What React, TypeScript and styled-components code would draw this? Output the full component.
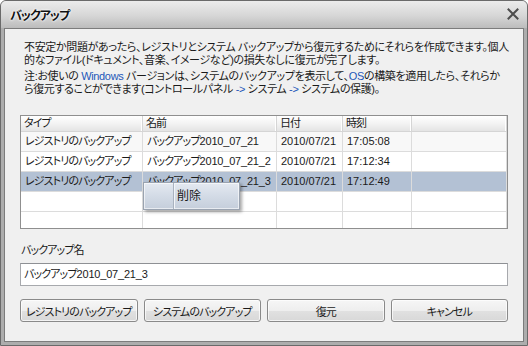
import React from "react";
import styled, { createGlobalStyle } from "styled-components";

const Global = createGlobalStyle`
  html, body { margin: 0; padding: 0; background: #ffffff; }
  body {
    font-family: "Liberation Sans", "Noto Sans CJK JP", sans-serif;
    font-size: 11px;
    color: #1a1a1a;
    font-feature-settings: "palt";
  }
  * { box-sizing: border-box; }
`;

const Window = styled.div`
  width: 528px;
  height: 346px;
  border: 1px solid #6a6a6a;
  border-radius: 6px 6px 0 0;
  overflow: hidden;
  display: flex;
  flex-direction: column;
  background: #acacac;
`;

const TitleBar = styled.div`
  height: 27px;
  flex: none;
  display: flex;
  align-items: center;
  justify-content: space-between;
  padding: 0 8px 1px 9px;
  background: linear-gradient(to bottom, #ececec 0%, #d6d6d6 55%, #bcbcbc 100%);
`;

const Title = styled.span`
  font-weight: bold;
  font-size: 12px;
  letter-spacing: -1px;
  color: #111;
  text-shadow: 0 0 3px #ffffff, 0 0 2px #ffffff;
`;

const Frame = styled.div`
  flex: 1;
  display: flex;
  padding: 0 3px 3px;
  background: #adadad;
`;

const Body = styled.div`
  flex: 1;
  min-width: 0;
  border: 1px solid #7c7c7c;
  background: #f0f0f0;
  padding: 12px 15px 0 15px;
  display: flex;
  flex-direction: column;
`;

const Para = styled.p<{ $gap?: number }>`
  margin: ${(p) => p.$gap ?? 0}px 0 0 4px;
  font-size: 11px;
  letter-spacing: -0.35px;
  line-height: 13px;
  white-space: nowrap;
`;

const Blue = styled.span`
  color: #2457b8;
`;

const Num = styled.span`
  letter-spacing: -0.2px;
`;

const TableWrap = styled.div`
  position: relative;
  margin-top: 19px;
  height: 114px;
  border: 1px solid #8f8f8f;
  background: #ffffff;
  overflow: hidden;
`;

const COLS = "122px 134px 66px 69px 1fr";

const HeaderRow = styled.div`
  display: grid;
  grid-template-columns: ${COLS};
  height: 16px;
  background: linear-gradient(to bottom, #ffffff 0%, #f3f3f3 50%, #e4e4e4 100%);
  border-bottom: 1px solid #d5d5d5;
`;

const HeaderCell = styled.div`
  font-size: 11px;
  letter-spacing: -0.9px;
  line-height: 15px;
  padding-left: 3px;
  border-right: 1px solid #d5d5d5;
  box-shadow: inset -1px 0 0 #ffffff;
  white-space: nowrap;
  overflow: hidden;
`;

const Row = styled.div<{ $bg: string }>`
  display: grid;
  grid-template-columns: ${COLS};
  height: 20px;
  background: ${(p) => p.$bg};
  border-bottom: 1px solid #dcdcdc;
`;

const Cell = styled.div<{ $latin?: boolean }>`
  font-size: 11px;
  letter-spacing: ${(p) => (p.$latin ? "0" : "-0.9px")};
  line-height: 19px;
  padding-left: 4px;
  border-right: 1px solid #dcdcdc;
  white-space: nowrap;
  overflow: hidden;
`;

const Menu = styled.div`
  position: absolute;
  left: 122px;
  top: 66px;
  width: 97px;
  height: 28px;
  display: flex;
  border: 1px solid #9aa3b0;
  background: linear-gradient(to bottom, #e4e9f1 0%, #d3dbe6 50%, #c5cedb 100%);
  box-shadow: inset 0 0 0 1px rgba(255, 255, 255, 0.6), 2px 2px 3px rgba(0, 0, 0, 0.35);
`;

const MenuIconCol = styled.div`
  width: 30px;
  border-right: 1px solid #a9b2bf;
  box-shadow: 1px 0 0 #f2f5f9;
`;

const MenuItem = styled.div`
  font-size: 12px;
  line-height: 26px;
  padding-left: 3px;
`;

const Label = styled.div`
  margin-top: 14px;
  margin-left: 1px;
  font-size: 11px;
  letter-spacing: -0.9px;
  line-height: 15px;
`;

const Input = styled.div`
  margin-top: 5px;
  height: 23px;
  border: 1px solid #a7a9ad;
  border-top-color: #8e9094;
  background: #ffffff;
  font-size: 11px;
  letter-spacing: -0.9px;
  line-height: 20px;
  padding-left: 3px;
`;

const ButtonRow = styled.div`
  margin-top: 13px;
  display: grid;
  grid-template-columns: repeat(4, minmax(0, 1fr));
  gap: 6px;
`;

const Button = styled.div`
  height: 23px;
  min-width: 0;
  border: 1px solid #8a8a8a;
  border-radius: 3px;
  background: linear-gradient(to bottom, #f6f6f6 0%, #eeeeee 50%, #e1e1e1 51%, #d8d8d8 100%);
  box-shadow: inset 0 0 0 1px rgba(255, 255, 255, 0.7);
  display: flex;
  align-items: center;
  justify-content: center;
  font-size: 11px;
  letter-spacing: -0.9px;
  white-space: nowrap;
  overflow: hidden;
`;

const CloseIcon = () => (
  <svg width="12" height="12" viewBox="0 0 12 12">
    <path d="M1.5 1.5 L10.5 10.5 M10.5 1.5 L1.5 10.5" stroke="#4d4d4d" strokeWidth="2" strokeLinecap="square" />
  </svg>
);

const rows = [
  { type: "レジストリのバックアップ", num: "2010_07_21", date: "2010/07/21", time: "17:05:08", bg: "#f8f8f8" },
  { type: "レジストリのバックアップ", num: "2010_07_21_2", date: "2010/07/21", time: "17:12:34", bg: "#ffffff" },
  { type: "レジストリのバックアップ", num: "2010_07_21_3", date: "2010/07/21", time: "17:12:49", bg: "#b3c1d4" },
  { type: "", num: "", date: "", time: "", bg: "#ffffff" },
  { type: "", num: "", date: "", time: "", bg: "#ffffff" },
];

export default function App() {
  return (
    <>
      <Global />
      <Window>
        <TitleBar>
          <Title>バックアップ</Title>
          <CloseIcon />
        </TitleBar>
        <Frame>
          <Body>
            <Para>
              不安定か問題があったら、レジストリとシステム バックアップから復元するためにそれらを作成できます。個人
              <br />
              的なファイル(ドキュメント、音楽、イメージなど)の損失なしに復元が完了します。
            </Para>
            <Para $gap={3}>
              注:お使いの <Blue>Windows</Blue> バージョンは、システムのバックアップを表示して、<Blue>OS</Blue>の構築を適用したら、それらか
              <br />
              ら復元することができます(コントロールパネル <Blue>-&gt;</Blue> システム <Blue>-&gt;</Blue> システムの保護)。
            </Para>
            <TableWrap>
              <HeaderRow>
                <HeaderCell>タイプ</HeaderCell>
                <HeaderCell>名前</HeaderCell>
                <HeaderCell>日付</HeaderCell>
                <HeaderCell>時刻</HeaderCell>
                <HeaderCell />
              </HeaderRow>
              {rows.map((r, i) => (
                <Row key={i} $bg={r.bg}>
                  <Cell>{r.type}</Cell>
                  <Cell>
                    {r.num && (
                      <>
                        バックアップ<Num>{r.num}</Num>
                      </>
                    )}
                  </Cell>
                  <Cell $latin>{r.date}</Cell>
                  <Cell $latin>{r.time}</Cell>
                  <Cell />
                </Row>
              ))}
              <Menu>
                <MenuIconCol />
                <MenuItem>削除</MenuItem>
              </Menu>
            </TableWrap>
            <Label>バックアップ名</Label>
            <Input>
              バックアップ<Num>2010_07_21_3</Num>
            </Input>
            <ButtonRow>
              <Button>レジストリのバックアップ</Button>
              <Button>システムのバックアップ</Button>
              <Button>復元</Button>
              <Button>キャンセル</Button>
            </ButtonRow>
          </Body>
        </Frame>
      </Window>
    </>
  );
}
